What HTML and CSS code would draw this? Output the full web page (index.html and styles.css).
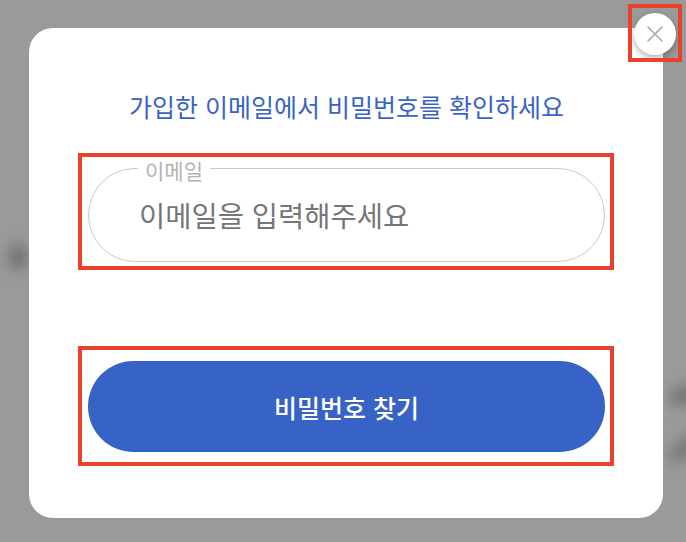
FILE: index.html
```html
<!DOCTYPE html>
<html lang="ko">
<head>
<meta charset="utf-8">
<link rel="stylesheet" href="styles.css">
</head>
<body>
<div class="backdrop">
  <div class="blob blob-left"></div>
  <div class="blob blob-right1"></div>
  <div class="blob blob-right2"></div>
</div>
<div class="modal">
  <h2 class="title">가입한 이메일에서 비밀번호를 확인하세요</h2>
  <div class="field">
    <span class="field-label">이메일</span>
    <span class="placeholder">이메일을 입력해주세요</span>
  </div>
  <button class="submit" type="button">비밀번호 찾기</button>
</div>
<button class="close" type="button" aria-label="닫기">
  <svg width="16" height="16" viewBox="0 0 16 16"><path d="M1 1 L15 15 M15 1 L1 15" stroke="#a8a8a8" stroke-width="1.6" stroke-linecap="round" fill="none"/></svg>
</button>
<div class="mark mark-close"></div>
<div class="mark mark-field"></div>
<div class="mark mark-button"></div>
</body>
</html>
```
FILE: styles.css
```css
html, body {
  margin: 0;
  padding: 0;
}
body {
  width: 686px;
  height: 542px;
  background: #9a9a9a;
  font-family: "Noto Sans CJK KR", "Noto Sans", sans-serif;
  position: relative;
  overflow: hidden;
  padding-top: 28px;
  box-sizing: border-box;
}
.backdrop {
  position: absolute;
  inset: 0;
}
.blob {
  position: absolute;
  background: #707070;
  border-radius: 50%;
  filter: blur(7px);
}
.blob-left {
  left: 8px;
  top: 244px;
  width: 20px;
  height: 26px;
}
.blob-right1 {
  left: 668px;
  top: 386px;
  width: 34px;
  height: 18px;
  transform: rotate(-15deg);
}
.blob-right2 {
  left: 664px;
  top: 440px;
  width: 44px;
  height: 14px;
  transform: rotate(-40deg);
}
.modal {
  position: relative;
  margin-left: 29px;
  width: 634px;
  height: 490px;
  background: #ffffff;
  border-radius: 24px;
  box-sizing: border-box;
  padding: 60px 58px 0 59px;
  display: flex;
  flex-direction: column;
}
.title {
  margin: 0;
  font-size: 25px;
  font-weight: 400;
  line-height: 36px;
  color: #3a64c4;
  text-align: center;
}
.field {
  position: relative;
  margin-top: 44px;
  height: 94px;
  border: 1px solid #c9c9c9;
  border-radius: 48px;
  box-sizing: border-box;
  display: flex;
  align-items: center;
  padding-left: 50px;
}
.field-label {
  position: absolute;
  left: 49px;
  top: -14px;
  padding: 0 7px;
  background: #ffffff;
  color: #b3b3b3;
  font-size: 21px;
  line-height: 30px;
}
.placeholder {
  font-size: 28.5px;
  color: #767676;
  line-height: 40px;
  margin-top: 0;
}
.submit {
  margin-top: 99px;
  height: 91px;
  border: none;
  border-radius: 46px;
  background: #3762c6;
  color: #ffffff;
  font-family: inherit;
  font-size: 25px;
  font-weight: 500;
  padding: 0;
}
.close {
  position: absolute;
  left: 634px;
  top: 13px;
  width: 42px;
  height: 42px;
  border-radius: 50%;
  border: none;
  background: #ffffff;
  box-shadow: 0 3px 6px rgba(0,0,0,0.3);
  padding: 0;
  display: flex;
  align-items: center;
  justify-content: center;
}
.mark {
  position: absolute;
  border: 4px solid #e8432a;
  box-sizing: border-box;
}
.mark-close {
  left: 628px;
  top: 4px;
  width: 54px;
  height: 58px;
}
.mark-field {
  left: 78px;
  top: 153px;
  width: 536px;
  height: 117px;
}
.mark-button {
  left: 78px;
  top: 346px;
  width: 536px;
  height: 120px;
}
```
